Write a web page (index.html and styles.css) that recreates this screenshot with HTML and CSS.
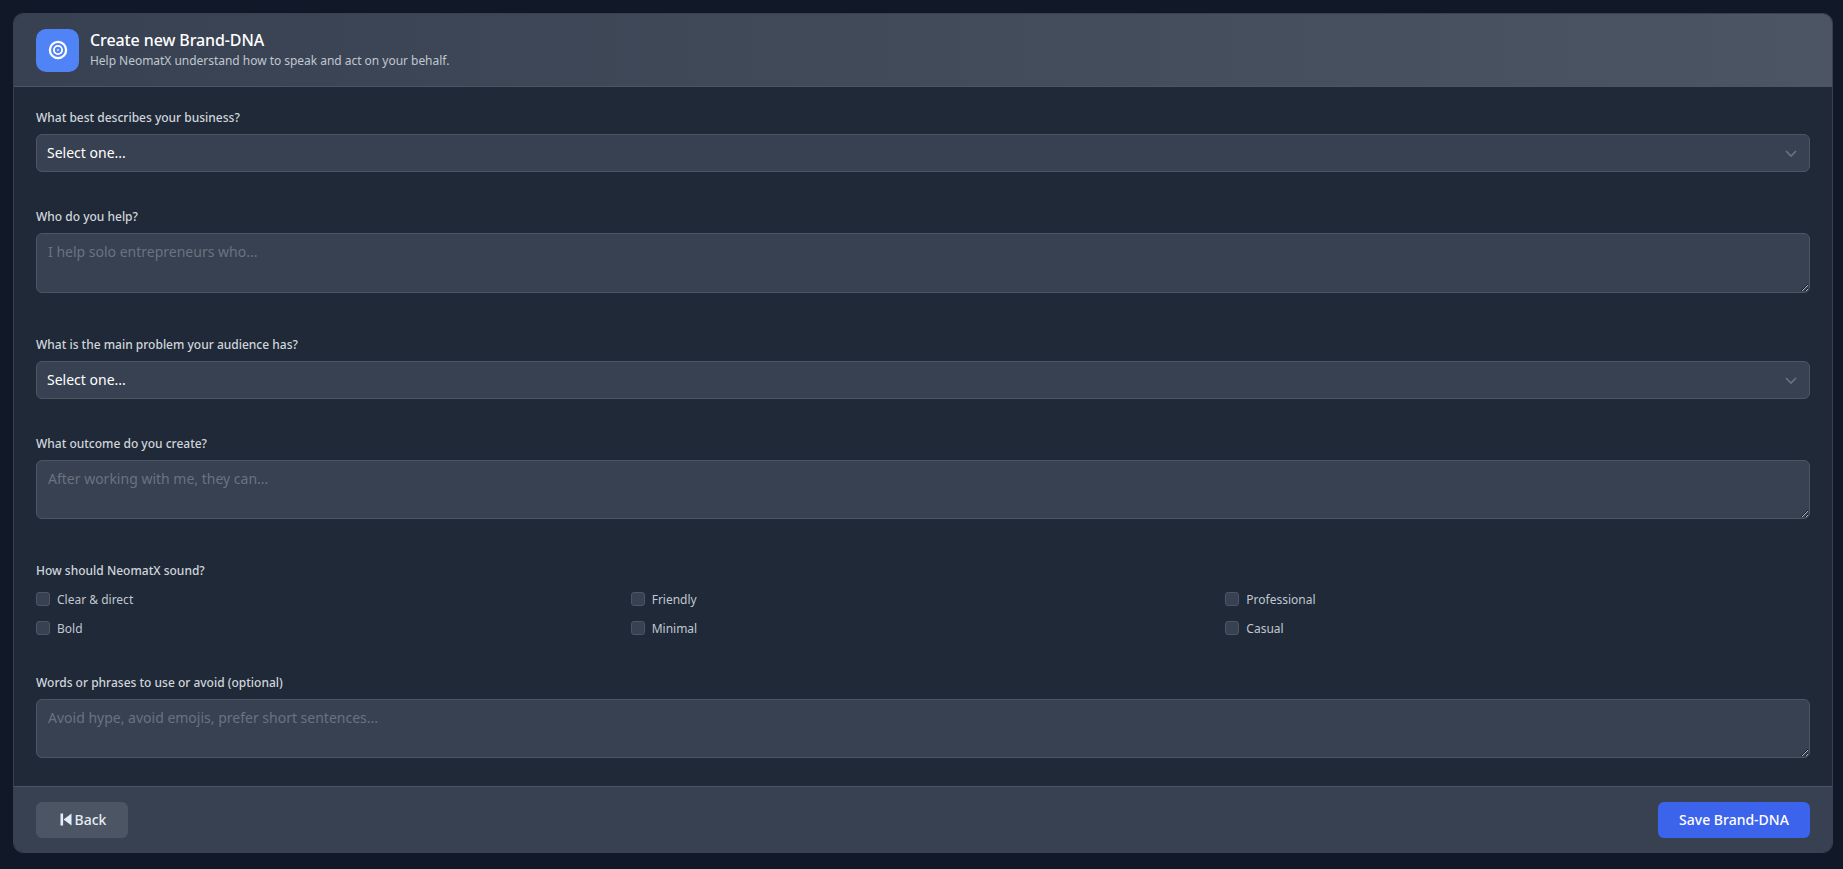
FILE: index.html
```html
<!DOCTYPE html>
<html lang="en">
<head>
<meta charset="utf-8">
<title>Create new Brand-DNA</title>
<link rel="stylesheet" href="styles.css">
</head>
<body>
<main class="card">
  <header class="head">
    <div class="logo">
      <svg width="20" height="20" viewBox="0 0 20 20" fill="none" stroke="#fff" aria-hidden="true">
        <circle cx="10" cy="10" r="8.1" stroke-width="2.3"/>
        <circle cx="10" cy="10" r="4.1" stroke-width="1.9"/>
        <circle cx="10" cy="10" r="1" fill="#dbe6fd" stroke="none"/>
      </svg>
    </div>
    <div class="head-text">
      <h1>Create new Brand-DNA</h1>
      <p>Help NeomatX understand how to speak and act on your behalf.</p>
    </div>
  </header>
  <form class="body">
    <div class="field">
      <label>What best describes your business?</label>
      <div class="select-wrap">
        <select><option>Select one...</option></select>
        <svg class="chev" width="14" height="14" viewBox="0 0 14 14" fill="none" stroke="#6b7280" stroke-width="1.6" aria-hidden="true"><path d="M2 5l5 5 5-5"/></svg>
      </div>
    </div>
    <div class="field">
      <label>Who do you help?</label>
      <textarea class="ta-a" placeholder="I help solo entrepreneurs who..."></textarea>
    </div>
    <div class="field">
      <label>What is the main problem your audience has?</label>
      <div class="select-wrap">
        <select><option>Select one...</option></select>
        <svg class="chev" width="14" height="14" viewBox="0 0 14 14" fill="none" stroke="#6b7280" stroke-width="1.6" aria-hidden="true"><path d="M2 5l5 5 5-5"/></svg>
      </div>
    </div>
    <div class="field">
      <label>What outcome do you create?</label>
      <textarea class="ta-b" placeholder="After working with me, they can..."></textarea>
    </div>
    <div class="field field-checks">
      <label>How should NeomatX sound?</label>
      <div class="checks">
        <label class="check"><input type="checkbox"><span>Clear &amp; direct</span></label>
        <label class="check"><input type="checkbox"><span>Friendly</span></label>
        <label class="check"><input type="checkbox"><span>Professional</span></label>
        <label class="check"><input type="checkbox"><span>Bold</span></label>
        <label class="check"><input type="checkbox"><span>Minimal</span></label>
        <label class="check"><input type="checkbox"><span>Casual</span></label>
      </div>
    </div>
    <div class="field">
      <label>Words or phrases to use or avoid (optional)</label>
      <textarea class="ta-b" placeholder="Avoid hype, avoid emojis, prefer short sentences..."></textarea>
    </div>
  </form>
  <footer class="foot">
    <button type="button" class="btn btn-back">
      <svg width="12" height="13" viewBox="0 0 12 13" fill="#e5edf7" aria-hidden="true"><rect x="0.5" y="0.5" width="2.6" height="12"/><path d="M11.5 0.5v12L3.5 6.5z"/></svg>
      <span>Back</span>
    </button>
    <button type="button" class="btn btn-save">Save Brand-DNA</button>
  </footer>
</main>
</body>
</html>
```
FILE: styles.css
```css
* { box-sizing: border-box; }
html, body { height: 100%; }
body {
  margin: 0;
  padding: 13px 10px 16px 13px;
  background: #111827;
  font-family: "Noto Sans", "Open Sans", sans-serif;
  color: #fff;
  overflow: hidden;
}
.card {
  height: 840px;
  display: flex;
  flex-direction: column;
  background: #1f2937;
  border: 1px solid #374151;
  border-radius: 10px;
  overflow: hidden;
}
.head {
  height: 73px;
  flex: none;
  display: flex;
  align-items: center;
  gap: 11px;
  padding: 0 22px;
  background: linear-gradient(90deg, #374151, #4b5563);
  border-bottom: 1px solid #4b5563;
}
.logo {
  width: 43px;
  height: 43px;
  flex: none;
  display: flex;
  align-items: center;
  justify-content: center;
  border-radius: 10px;
  background: #4f83f6;
}
.head-text { min-width: 0; }
h1 {
  margin: 0;
  font-size: 16px;
  line-height: 21px;
  font-weight: 500;
  letter-spacing: -0.1px;
  color: #fff;
}
.head-text p {
  margin: 1px 0 0;
  font-size: 12px;
  line-height: 18px;
  letter-spacing: -0.03px;
  color: #c0c7d1;
}
.body {
  flex: 1;
  min-height: 0;
  padding: 23px 22px 0;
  display: flex;
  flex-direction: column;
}
.field { display: flex; flex-direction: column; margin-bottom: 37px; }
.field-checks { margin-bottom: 37px; }
.field > label {
  font-size: 12px;
  line-height: 16px;
  font-weight: 500;
  color: #d1d5db;
  margin-bottom: 8px;
}
.field-checks > label { margin-bottom: 10px; }
.select-wrap { position: relative; }
select, textarea {
  display: block;
  width: 100%;
  margin: 0;
  border: 1px solid #4b5563;
  border-radius: 6px;
  background: #374151;
  color: #fff;
  font-family: inherit;
  font-size: 14px;
  outline: none;
}
select {
  height: 38px;
  padding: 0 10px 2px;
  appearance: none;
  -webkit-appearance: none;
}
.chev { position: absolute; right: 12px; top: 12px; pointer-events: none; }
textarea { padding: 8px 11px; line-height: 20px; resize: vertical; margin-bottom: 7px; }
textarea::placeholder { color: #6b7280; opacity: 1; }
.ta-a { height: 60px; }
.ta-b { height: 59px; }
.checks {
  display: grid;
  grid-template-columns: repeat(3, 1fr);
  gap: 9px 10px;
}
.check {
  display: flex;
  align-items: center;
  gap: 7px;
  height: 20px;
  font-size: 12px;
  color: #c0c7d1;
}
.check input {
  appearance: none;
  -webkit-appearance: none;
  width: 14px;
  height: 14px;
  margin: 0;
  flex: none;
  background: #374151;
  border: 1px solid #4b5563;
  border-radius: 3px;
}
.foot {
  height: 66px;
  flex: none;
  display: flex;
  align-items: center;
  justify-content: space-between;
  padding: 0 22px;
  background: #374151;
  border-top: 1px solid #4b5563;
}
.btn {
  height: 36px;
  border: 0;
  border-radius: 6px;
  display: inline-flex;
  align-items: center;
  justify-content: center;
  font-family: inherit;
  font-size: 14px;
  font-weight: 500;
  color: #fff;
}
.btn-back { width: 92px; gap: 3px; padding: 0 0 0 2px; background: #4b5563; color: #e5edf7; }
.btn-save { width: 152px; background: #3b63ec; }
```
